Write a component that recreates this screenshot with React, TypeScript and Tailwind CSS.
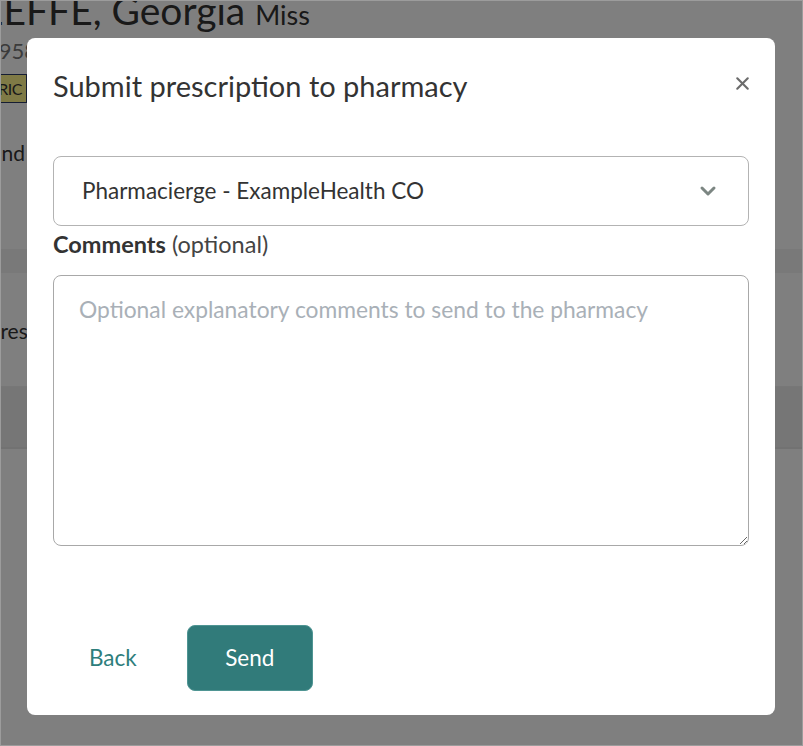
import { X, ChevronDown } from 'lucide-react';

function PatientBackdrop() {
    return (
        <div className="h-[746px] overflow-hidden bg-white text-[#333]">
            <div className="-mt-[14px]">
                <h1 className="-ml-[84px] text-[39px] leading-[48px] whitespace-nowrap">
                    O'KEEFFE, Georgia <span className="text-[27px]">Miss</span>
                </h1>
                <p className="-ml-[150px] -mt-[2px] text-[22px] leading-[28px] text-[#777] whitespace-nowrap">DOB 15-Nov-1958</p>
                <div className="mt-[9px] flex w-[27px] justify-end">
                    <span className="shrink-0 border border-[#2b3a67] bg-[#fff48c] px-[4px] text-[16px] leading-[27px] tracking-[-0.5px] whitespace-nowrap">
                        GERIATRIC
                    </span>
                </div>
                <p className="-ml-[69px] mt-[36px] text-[21px] leading-[28px] whitespace-nowrap">Route and</p>
            </div>
            <div className="mt-[82px] h-[24px] bg-[#f2f2f2]" />
            <div className="h-[114px] border-b border-[#eee] pt-[44px]">
                <p className="-ml-[12px] text-[21px] leading-[28px] whitespace-nowrap">Prescription address</p>
            </div>
            <div className="h-[60px] bg-[#ececec]" />
            <div className="h-[2px] bg-[#e4e4e4]" />
        </div>
    );
}

export default function App() {
    return (
        <div className="relative h-[746px] overflow-hidden font-['Lato',sans-serif]">
            <PatientBackdrop />

            {/* overlay */}
            <div className="absolute inset-0 border border-[#9c9c9c] bg-black/50" />

            {/* modal */}
            <div className="absolute left-[27px] top-[38px] flex h-[677px] w-[748px] flex-col rounded-[8px] bg-white px-[26px] pb-[24px] pt-[27px] text-[#333]">
                <div className="flex items-start justify-between">
                    <h2 className="text-[29px] leading-[42px]">Submit prescription to pharmacy</h2>
                    <button className="mr-[-13px] mt-[-2px] flex h-[40px] w-[40px] items-center justify-center text-[#6b6b6b]">
                        <X size={21} strokeWidth={2.4} />
                    </button>
                </div>

                <div className="mt-[49px] flex h-[70px] items-center justify-between rounded-[8px] border border-[#b3b3b3] pl-[28px] pr-[28px]">
                    <span className="text-[22.5px] leading-[30px]">Pharmacierge - ExampleHealth CO</span>
                    <ChevronDown size={24} strokeWidth={3} className="text-[#7c8682]" />
                </div>

                <label className="mt-[4px] text-[23.5px] leading-[28px]">
                    <span className="font-bold">Comments</span> <span className="text-[#444]">(optional)</span>
                </label>

                <textarea
                    className="mt-[17px] h-[271px] rounded-[8px] border border-[#a8a8a8] px-[25px] pt-[17px] text-[22.8px] leading-[32px] outline-none placeholder:text-[#a9b0b7]"
                    placeholder="Optional explanatory comments to send to the pharmacy"
                />

                <div className="mt-auto flex items-center gap-[14px]">
                    <button className="h-[66px] px-[36px] text-[22.5px] text-[#2e7e7c]">Back</button>
                    <button className="h-[66px] w-[126px] rounded-[8px] border border-[#4f9593] bg-[#317b7a] text-[22.5px] text-white">
                        Send
                    </button>
                </div>
            </div>
        </div>
    );
}
